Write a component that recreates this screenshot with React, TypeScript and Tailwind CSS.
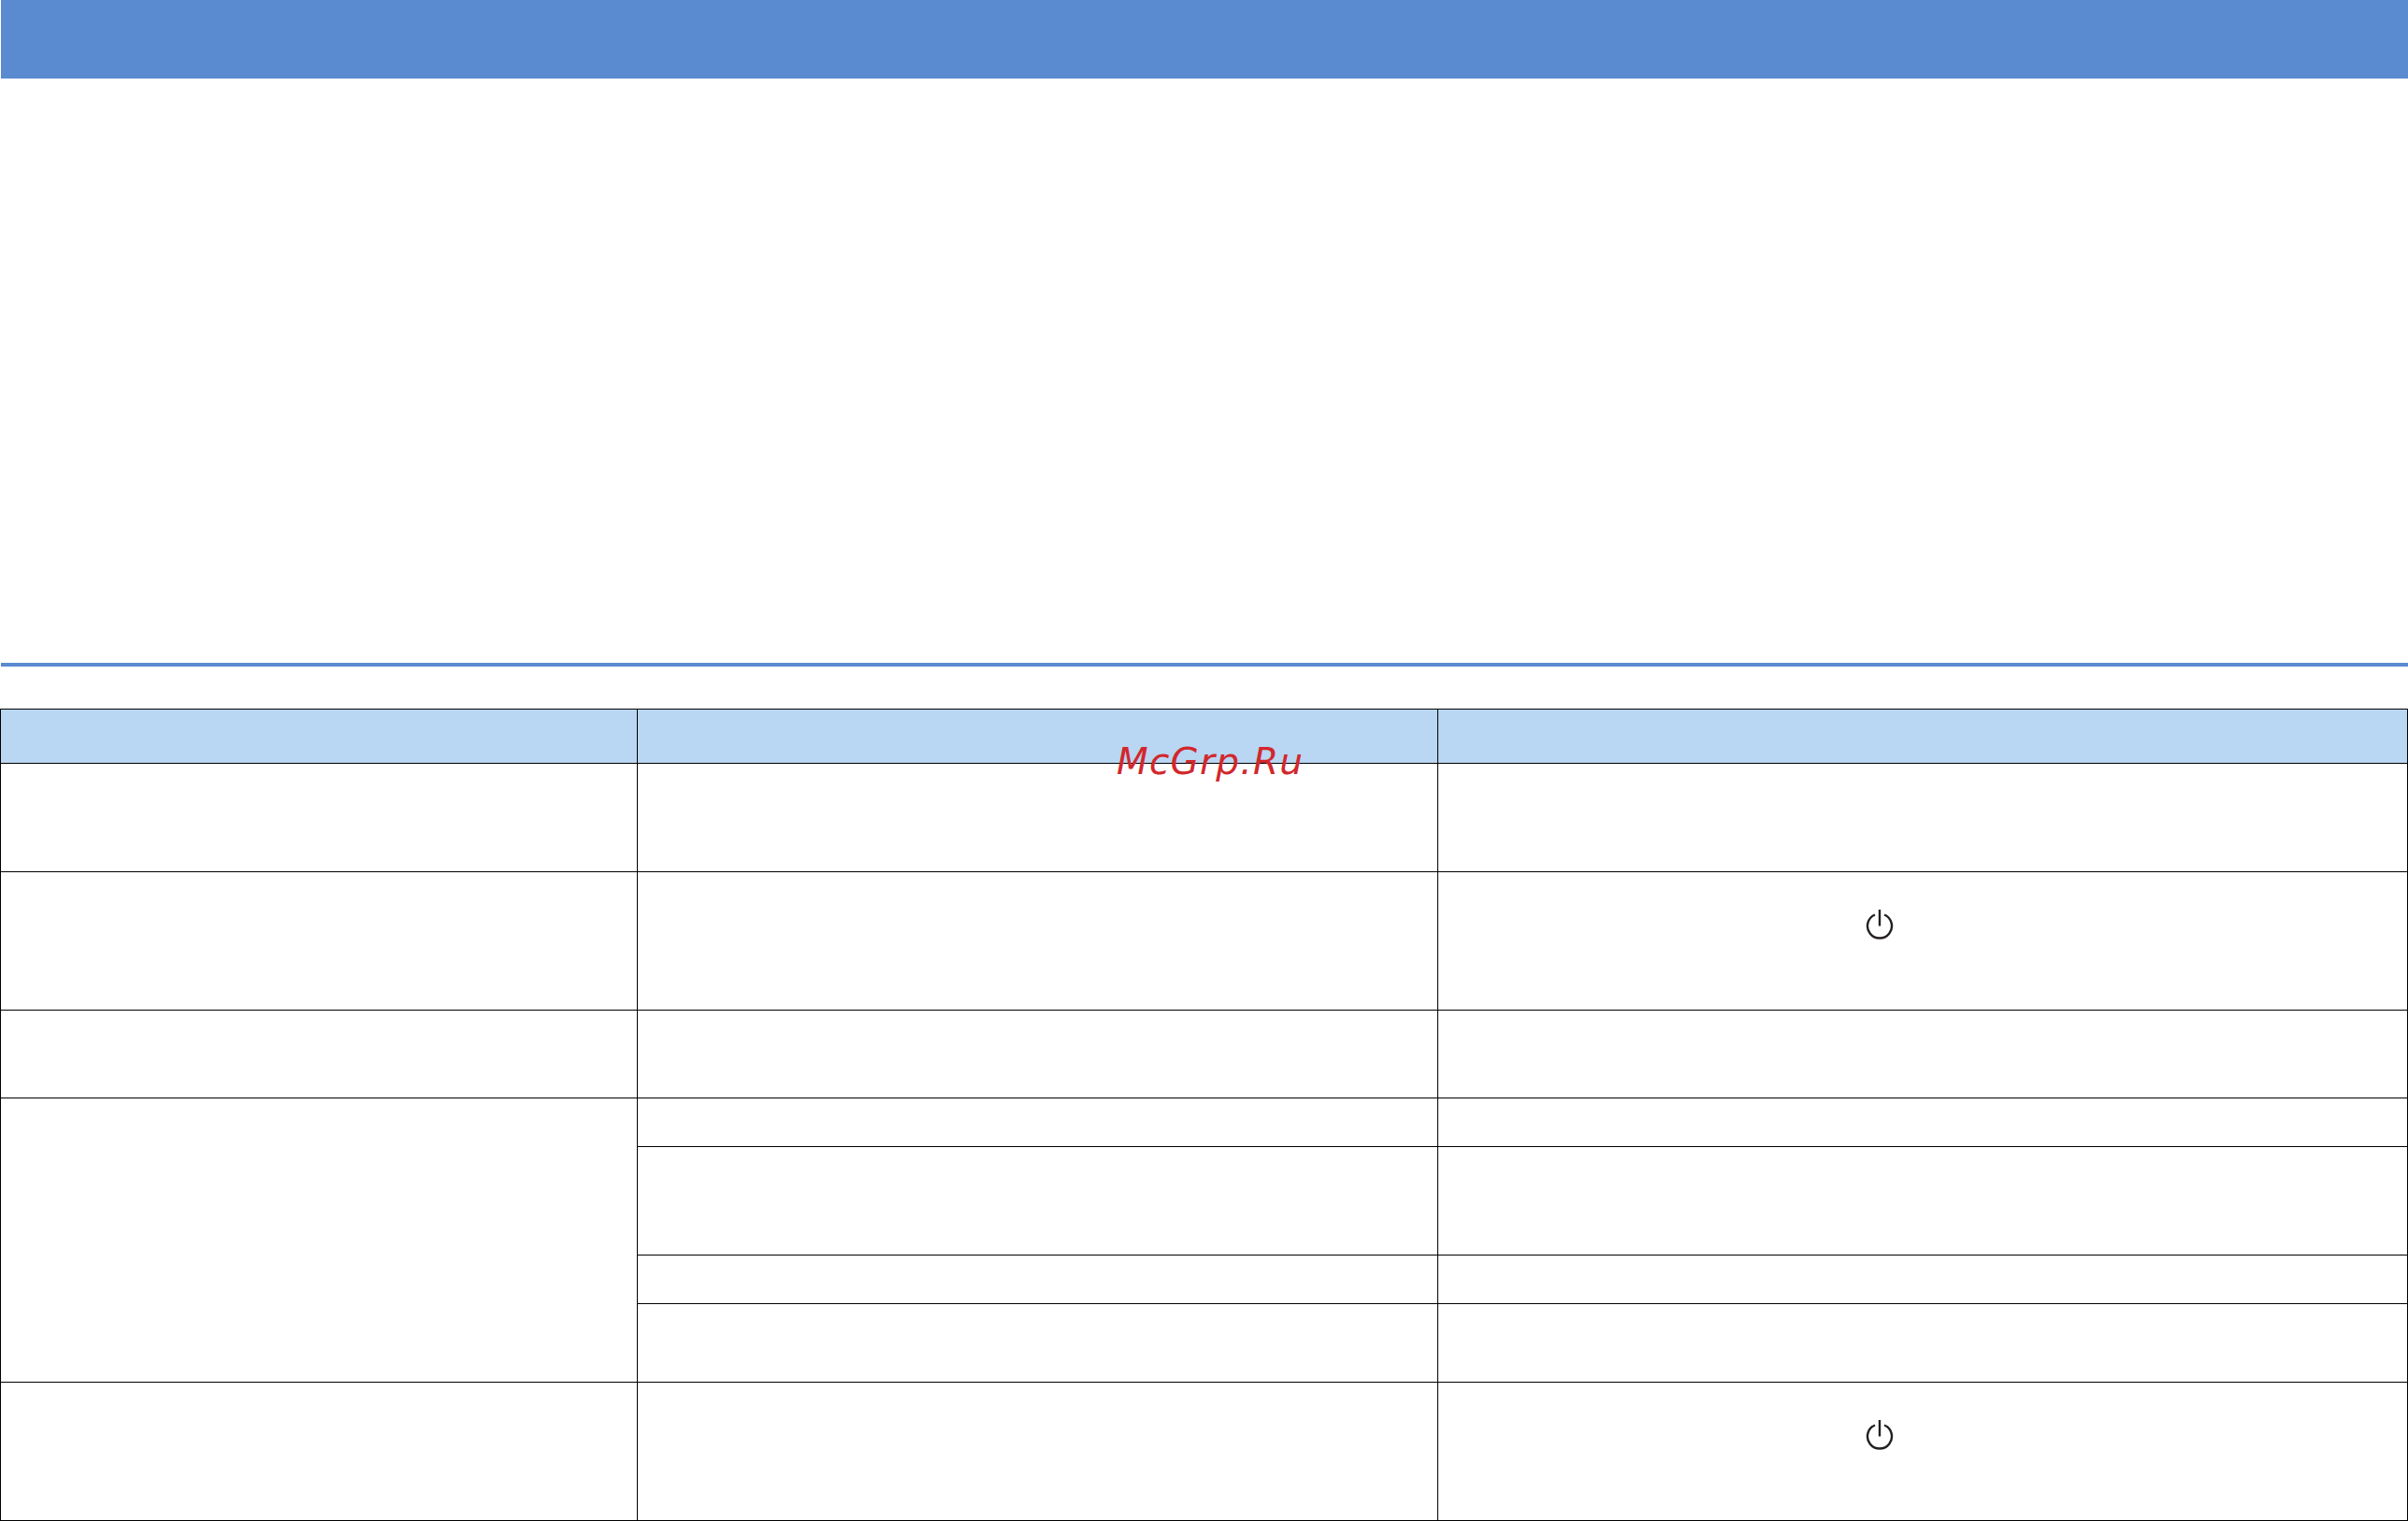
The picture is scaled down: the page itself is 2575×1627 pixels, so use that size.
function PowerIcon() {
  return (
    <svg
      aria-hidden
      viewBox="0 0 30 36"
      className="block h-9 w-[30px]"
      fill="none"
      stroke="#231f20"
      strokeWidth="2.4"
    >
      <path d="M10 7.5A13 13 0 1 0 20 7.5" />
      <path d="M15 2V19.5" />
    </svg>
  );
}

const cell = "border-r border-b border-black p-0 align-top";
const firstCell = "border-l border-r border-b border-black p-0 align-top";
const headCell = "border-t border-r border-b border-black bg-[#b9d6f2] p-0";

export default function App() {
  return (
    <div className="relative h-[1627px] w-[2575px] overflow-hidden bg-white">
      <div className="ml-px h-[84px] bg-[#5a8bd0]" />
      <div className="mt-[625px] ml-px h-1 bg-[#5a8bd0]" />

      <table className="mt-[45px] w-[2575px] table-fixed border-separate border-spacing-0">
        <colgroup>
          <col className="w-[682px]" />
          <col className="w-[856px]" />
          <col className="w-[1037px]" />
        </colgroup>
        <thead>
          <tr className="h-[59px]">
            <th className={`${headCell} border-l`} />
            <th className={headCell} />
            <th className={headCell} />
          </tr>
        </thead>
        <tbody>
          <tr className="h-[116px]">
            <td className={firstCell} />
            <td className={cell} />
            <td className={cell} />
          </tr>
          <tr className="h-[148px]">
            <td className={firstCell} />
            <td className={cell} />
            <td className={cell}>
              <div className="pt-[38px] pl-[457px]">
                <PowerIcon />
              </div>
            </td>
          </tr>
          <tr className="h-[94px]">
            <td className={firstCell} />
            <td className={cell} />
            <td className={cell} />
          </tr>
          <tr className="h-[52px]">
            <td rowSpan={4} className={firstCell} />
            <td className={cell} />
            <td className={cell} />
          </tr>
          <tr className="h-[116px]">
            <td className={cell} />
            <td className={cell} />
          </tr>
          <tr className="h-[52px]">
            <td className={cell} />
            <td className={cell} />
          </tr>
          <tr className="h-[84px]">
            <td className={cell} />
            <td className={cell} />
          </tr>
          <tr className="h-[148px]">
            <td className={firstCell} />
            <td className={cell} />
            <td className={cell}>
              <div className="pt-[38px] pl-[457px]">
                <PowerIcon />
              </div>
            </td>
          </tr>
        </tbody>
      </table>

      {/* watermark sits over the table */}
      <div className="absolute top-[791px] left-[1194px] font-['DejaVu_Sans',sans-serif] text-[39px] leading-[48px] tracking-[1.25px] whitespace-nowrap text-[#d2272c] italic">
        McGrp.Ru
      </div>
    </div>
  );
}
